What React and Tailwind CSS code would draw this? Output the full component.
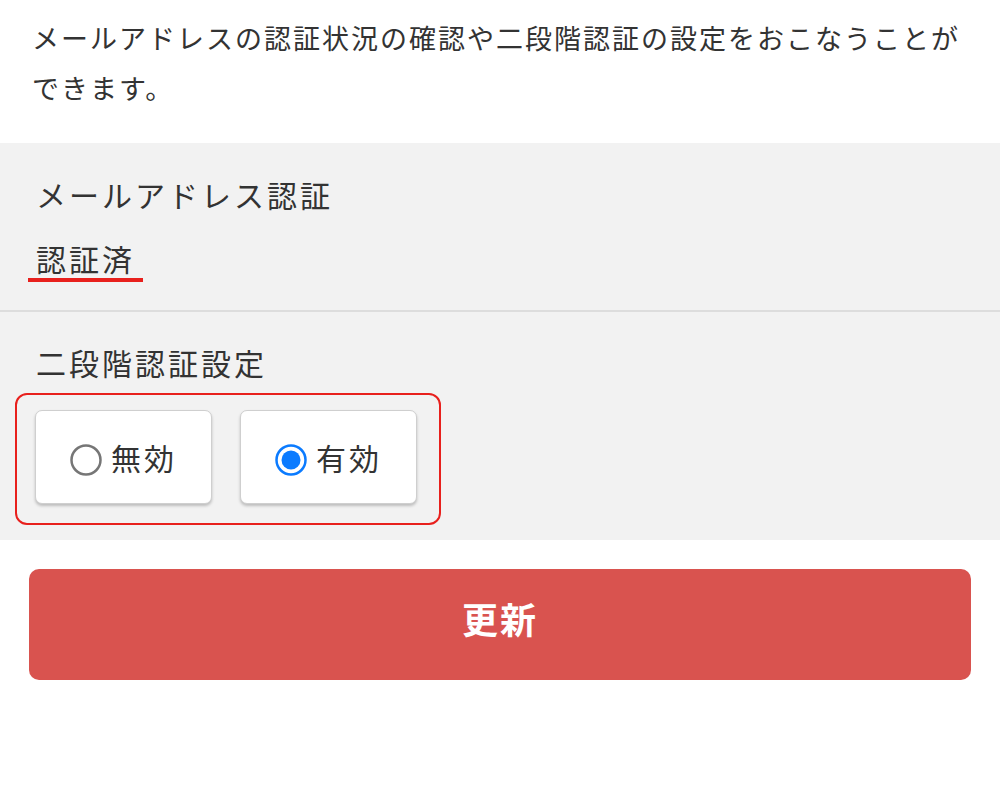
import React from "react";

function Radio({ checked }) {
  if (checked) {
    return (
      <svg width="32" height="32" viewBox="0 0 32 32" className="shrink-0 mt-[6px]">
        <circle cx="16" cy="16" r="14.5" fill="white" stroke="#0b7bff" strokeWidth="2.5" />
        <circle cx="16" cy="16" r="9.5" fill="#0b7bff" />
      </svg>
    );
  }
  return (
    <svg width="32" height="32" viewBox="0 0 32 32" className="shrink-0 mt-[6px]">
      <circle cx="16" cy="16" r="14.5" fill="white" stroke="#767676" strokeWidth="2.5" />
    </svg>
  );
}

function Option({ label, checked }) {
  return (
    <div className="w-[177px] h-[94px] bg-white rounded-[7px] border border-[#cfcfcf] shadow-[0_2px_3px_rgba(0,0,0,0.22)] flex items-center justify-center gap-[9px]">
      <Radio checked={checked} />
      <span className="text-[30px] leading-[40px] tracking-[3px] text-[#333]">{label}</span>
    </div>
  );
}

export default function App() {
  return (
    <div className="w-[1000px] min-h-[786px] bg-white text-[#333] font-['Noto_Sans_CJK_JP','Noto_Sans',sans-serif]">
      <p className="pl-[32px] pr-[30px] pt-[13px] text-[27px] leading-[50px] tracking-[2px]">
        メールアドレスの認証状況の確認や二段階認証の設定をおこなうことが<br />できます。
      </p>
      <div className="mt-[30px] bg-[#f2f2f2]">
        <div className="pt-[31px] pb-[28px] border-b-2 border-[#dddddd]">
          <h2 className="pl-[36px] text-[30px] leading-[40px] tracking-[3px] font-normal">メールアドレス認証</h2>
          <div className="mt-[24px] pl-[28px]">
            <span className="inline-block px-[8px] text-[30px] leading-[40px] tracking-[3px] border-b-4 border-[#e8201d]">認証済</span>
          </div>
        </div>
        <div className="pt-[30px] pb-[15px]">
          <h2 className="pl-[36px] text-[30px] leading-[40px] tracking-[3px] font-normal">二段階認証設定</h2>
          <div className="mt-[11px] ml-[15px] w-[426px] border-2 border-[#e8201d] rounded-[12px] pl-[18px] pt-[15px] pb-[19px] flex gap-[28px]">
            <Option label="無効" checked={false} />
            <Option label="有効" checked={true} />
          </div>
        </div>
      </div>
      <div className="px-[29px] mt-[29px]">
        <button className="w-full h-[111px] pb-[14px] rounded-[10px] bg-[#d9534f] text-white text-[36px] font-bold tracking-[2px] flex items-center justify-center">
          更新
        </button>
      </div>
    </div>
  );
}
